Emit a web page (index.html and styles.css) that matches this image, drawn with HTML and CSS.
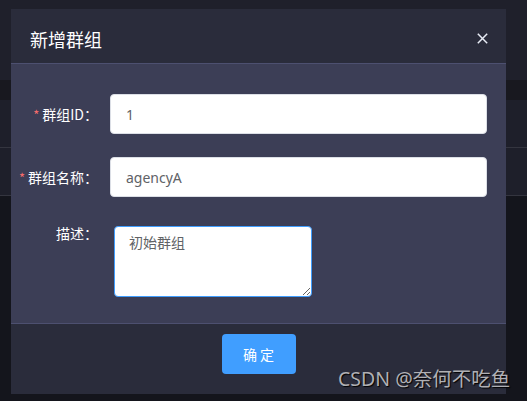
FILE: index.html
```html
<!DOCTYPE html>
<html lang="zh-CN">
<head>
<meta charset="utf-8">
<title>新增群组</title>
<link rel="stylesheet" href="styles.css">
</head>
<body>
<div class="page">
  <div class="band band-top"></div>
  <div class="band band-dark"></div>
  <div class="band band-row"></div>
  <div class="band band-row"></div>
  <div class="band band-rest"></div>
</div>
<div class="overlay">
  <div class="dialog">
    <div class="dialog-header">
      <span class="dialog-title">新增群组</span>
      <button class="dialog-close" aria-label="关闭">
        <svg width="11" height="11" viewBox="0 0 11 11"><path d="M0.8 0.8 L10.2 10.2 M10.2 0.8 L0.8 10.2" stroke="#e8ecf5" stroke-width="1.5" fill="none"/></svg>
      </button>
    </div>
    <div class="dialog-body">
      <div class="form-item">
        <label class="form-label"><span class="req">*</span>群组ID：</label>
        <div class="form-content"><input class="input" type="text" value="1"></div>
      </div>
      <div class="form-item">
        <label class="form-label"><span class="req">*</span>群组名称：</label>
        <div class="form-content"><input class="input" type="text" value="agencyA"></div>
      </div>
      <div class="form-item form-item-last">
        <label class="form-label form-label-top">描述：</label>
        <div class="form-content form-content-ta"><textarea class="textarea">初始群组</textarea></div>
      </div>
    </div>
    <div class="dialog-footer">
      <button class="btn-primary">确 定</button>
    </div>
  </div>
</div>
<div class="watermark">CSDN @奈何不吃鱼</div>
</body>
</html>
```

FILE: styles.css
```css
* { box-sizing: border-box; }
html, body { margin: 0; padding: 0; }
body {
  width: 527px;
  height: 401px;
  overflow: hidden;
  background: #14151c;
  font-family: "Noto Sans CJK SC", "Noto Sans", sans-serif;
  position: relative;
}
.page { display: flex; flex-direction: column; }
.band-top { height: 80px; background: #1f202b; }
.band-dark { height: 20px; background: #18181f; }
.band-row { height: 48px; background: #1e1f2a; border-bottom: 1px solid #34353f; }
.band-rest { flex: 1; }

.overlay {
  position: absolute;
  left: 0; top: 0; right: 0; bottom: 0;
  padding: 9px 21px 0 11px;
}
.dialog {
  width: 495px;
  background: #3c3e56;
}
.dialog-header {
  height: 55px;
  background: #2a2c3b;
  border-bottom: 1px solid #4d5070;
  display: flex;
  align-items: center;
  justify-content: space-between;
  padding: 5px 18px 0 19px;
}
.dialog-title {
  color: #ffffff;
  font-size: 18px;
  line-height: 24px;
}
.dialog-close {
  background: none;
  border: 0;
  padding: 0;
  width: 11px;
  height: 11px;
  display: block;
}
.dialog-close svg { display: block; }

.dialog-body {
  padding: 30px 19px 26px 0;
}
.form-item {
  display: flex;
  align-items: center;
  margin-bottom: 23px;
}
.form-item-last { align-items: flex-start; margin-top: 29px; margin-bottom: 0; }
.form-label {
  width: 99px;
  padding-right: 12px;
  text-align: right;
  color: #ffffff;
  font-size: 14px;
  line-height: 18px;
  white-space: nowrap;
}
.form-label-top { margin-top: -2px; }
.req { color: #f56c6c; margin-right: 3px; font-size: 13px; }
.form-content { flex: 1; }
.form-content-ta { padding-left: 4px; }
.input {
  display: block;
  width: 377px;
  height: 40px;
  border: 1px solid #dcdfe6;
  border-radius: 4px;
  background: #ffffff;
  padding: 0 15px;
  color: #606266;
  font-family: "Noto Sans", "Noto Sans CJK SC", sans-serif;
  font-size: 14px;
  outline: none;
}
.textarea {
  display: block;
  width: 198px;
  height: 71px;
  border: 1px solid #409eff;
  border-radius: 4px;
  background: #ffffff;
  padding: 5px 14px;
  color: #606266;
  font-family: "Noto Sans CJK SC", sans-serif;
  font-size: 14px;
  line-height: 21px;
  resize: vertical;
  outline: none;
}

.dialog-footer {
  height: 71px;
  background: #2a2c3b;
  border-top: 1px solid #4d5070;
  display: flex;
  justify-content: center;
  align-items: flex-start;
  padding-top: 10px;
}
.btn-primary {
  width: 74px;
  height: 40px;
  background: #409eff;
  border: 0;
  border-radius: 4px;
  color: #ffffff;
  font-family: "Noto Sans CJK SC", sans-serif;
  font-size: 14px;
  padding: 0;
}

.watermark {
  position: absolute;
  left: 338px;
  top: 366px;
  color: #b0b0b4;
  font-family: "Noto Sans", "Noto Sans CJK SC", sans-serif;
  font-size: 19.5px;
  line-height: 26px;
  text-shadow: 1px 1px 1px #000000;
  white-space: nowrap;
}
```
